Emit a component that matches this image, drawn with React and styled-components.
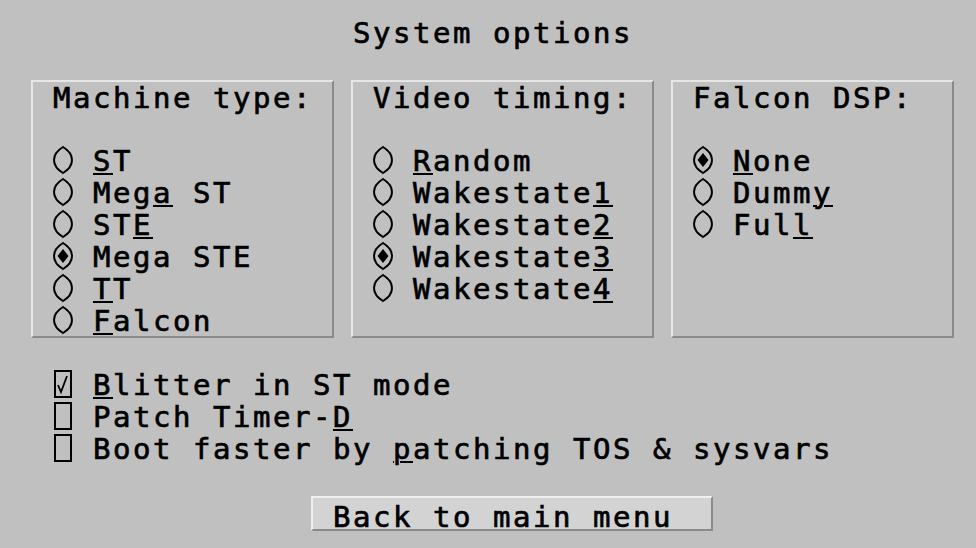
import React from "react";
import styled, { createGlobalStyle } from "styled-components";

const GlobalStyle = createGlobalStyle`
  body {
    margin: 0;
    background: #c0c0c0;
  }
`;

const Screen = styled.div`
  width: 976px;
  height: 548px;
  overflow: hidden;
  box-sizing: border-box;
  padding-top: 16px;
  background: #c0c0c0;
  color: #000;
  font-family: "DejaVu Sans Mono", "Liberation Mono", monospace;
  font-size: 29px;
  letter-spacing: 2.54px;
  white-space: pre;
  -webkit-text-stroke: 0.7px #000;
`;

const Title = styled.div`
  height: 32px;
  line-height: 35px;
  padding-left: 353px;
`;

const Panels = styled.div`
  display: flex;
  gap: 17px;
  margin-top: 32px;
  padding-left: 31px;
`;

const Panel = styled.div`
  box-sizing: border-box;
  width: ${(p) => p.$width}px;
  height: 258px;
  border: 2px solid;
  border-color: #e6e6e6 #8a8a8a #8a8a8a #e6e6e6;
`;

const PanelTitle = styled.div`
  height: 30px;
  line-height: 33px;
  padding-left: 20px;
  margin-bottom: 32px;
`;

const OptionRow = styled.div`
  display: flex;
  align-items: flex-start;
  height: 32px;
  padding-left: ${(p) => p.$indent}px;
`;

const Mark = styled.span`
  display: flex;
  align-items: center;
  width: 40px;
  height: 32px;
`;

const Text = styled.span`
  line-height: 35px;
`;

const Key = styled.span`
  text-decoration: underline;
  text-decoration-thickness: 2px;
  text-underline-offset: 2px;
`;

const Checks = styled.div`
  margin-top: 30px;
`;

const ButtonRow = styled.div`
  margin-top: 32px;
  padding-left: 311px;
`;

const Button = styled.button`
  display: block;
  box-sizing: border-box;
  width: 402px;
  height: 35px;
  padding: 2px 0 0 20px;
  text-align: left;
  font: inherit;
  letter-spacing: inherit;
  color: #000;
  background: #d3d3d3;
  border: 2px solid;
  border-color: #f0f0f0 #8a8a8a #8a8a8a #f0f0f0;
  cursor: pointer;
`;

function Radio({ on }) {
  return (
    <svg width="20" height="30" viewBox="0 0 20 30">
      <path
        d="M10 2 C15 5 19 10 19 15 C19 20 15 25 10 28 C5 25 1 20 1 15 C1 10 5 5 10 2 Z"
        fill="none"
        stroke="#000"
        strokeWidth="2"
      />
      {on && <path d="M10 8 L15.5 15 L10 22 L4.5 15 Z" fill="#000" />}
    </svg>
  );
}

function Check({ on }) {
  return (
    <svg width="20" height="30" viewBox="0 0 20 30">
      <rect x="2" y="2" width="16" height="26" fill="none" stroke="#000" strokeWidth="2" />
      {on && (
        <path d="M5 16 L8 23 L14 7" fill="none" stroke="#000" strokeWidth="1.8" />
      )}
    </svg>
  );
}

// label with one underlined hotkey letter, written as "_X"
function Label({ text }) {
  const i = text.indexOf("_");
  if (i < 0) return <Text>{text}</Text>;
  return (
    <Text>
      {text.slice(0, i)}
      <Key>{text[i + 1]}</Key>
      {text.slice(i + 2)}
    </Text>
  );
}

const groups = [
  {
    title: "Machine type:",
    width: 303,
    options: ["_ST", "Meg_a ST", "ST_E", "Mega STE", "_TT", "_Falcon"],
    selected: 3,
  },
  {
    title: "Video timing:",
    width: 303,
    options: ["_Random", "Wakestate_1", "Wakestate_2", "Wakestate_3", "Wakestate_4"],
    selected: 3,
  },
  {
    title: "Falcon DSP:",
    width: 283,
    options: ["_None", "Dumm_y", "Ful_l"],
    selected: 0,
  },
];

const checks = [
  { label: "_Blitter in ST mode", on: true },
  { label: "Patch Timer-_D", on: false },
  { label: "Boot faster by _patching TOS & sysvars", on: false },
];

export default function App() {
  return (
    <>
      <GlobalStyle />
      <Screen>
        <Title>System options</Title>
        <Panels>
          {groups.map((g) => (
            <Panel key={g.title} $width={g.width}>
              <PanelTitle>{g.title}</PanelTitle>
              {g.options.map((o, i) => (
                <OptionRow key={o} $indent={20}>
                  <Mark>
                    <Radio on={i === g.selected} />
                  </Mark>
                  <Label text={o} />
                </OptionRow>
              ))}
            </Panel>
          ))}
        </Panels>
        <Checks>
          {checks.map((c) => (
            <OptionRow key={c.label} $indent={53}>
              <Mark>
                <Check on={c.on} />
              </Mark>
              <Label text={c.label} />
            </OptionRow>
          ))}
        </Checks>
        <ButtonRow>
          <Button>Back to main menu</Button>
        </ButtonRow>
      </Screen>
    </>
  );
}
